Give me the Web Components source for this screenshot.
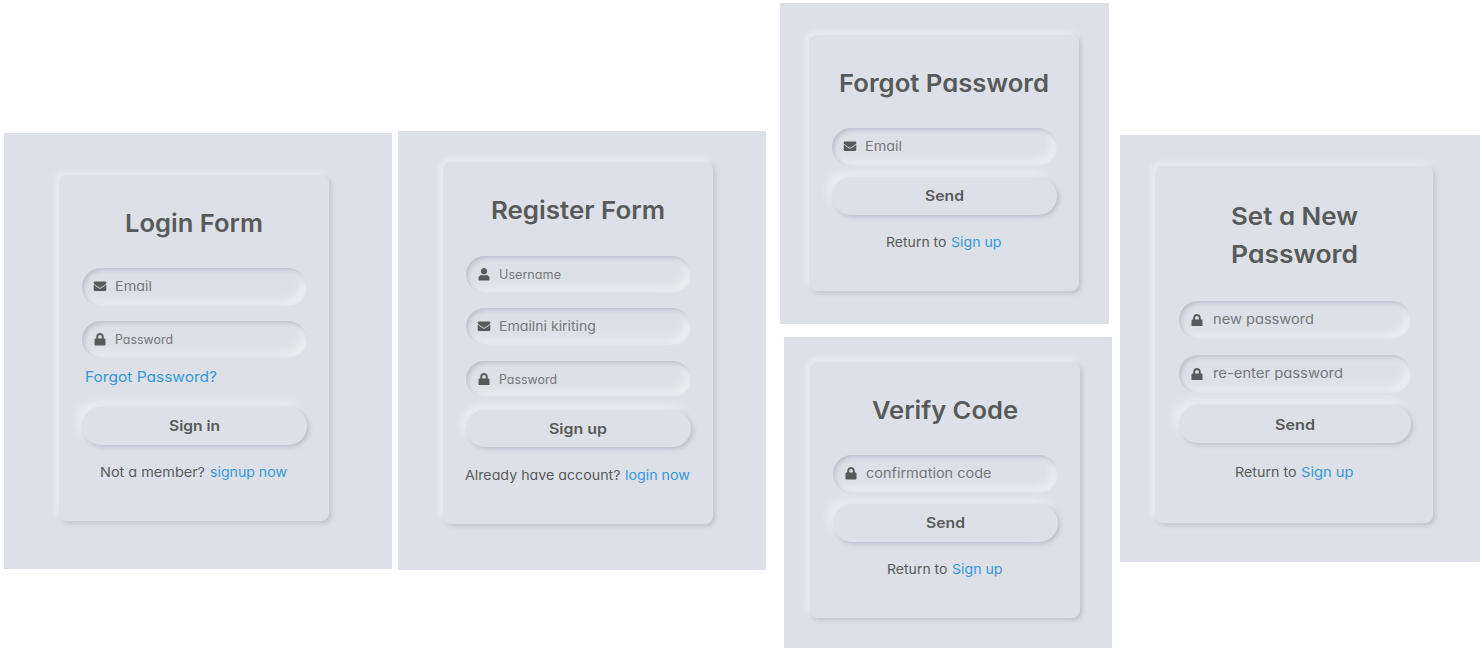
<!DOCTYPE html>
<html lang="en">
<head>
<meta charset="utf-8">
<title>Account forms</title>
<style>
html,body{margin:0;background:#fff}
body{font-family:Inter,"Open Sans",sans-serif;color:#595959;font-feature-settings:"cv11" 1;width:1482px;height:648px;overflow:hidden}
</style>
</head>
<body>
<forms-page></forms-page>
<script>
const define = (name, html, setup) => customElements.define(name, class extends HTMLElement {
  connectedCallback() {
    if (this.shadowRoot) return;
    const root = this.attachShadow({ mode: 'open' });
    root.innerHTML = html;
    if (setup) setup(this, root);
  }
});

/* Text widened to an even measure given in pixels. */
define('fit-text', `<style>:host{display:inline-block;white-space:nowrap}span{display:inline-block;transform-origin:0 50%}</style><span><slot></slot></span>`, el => {
  el.style.width = el.getAttribute('w') + 'px';
});

define('form-panel', `<style>
:host{display:block;box-sizing:border-box;flex:none;background:#dde1e7}
.card{box-sizing:border-box;width:var(--cw,270px);height:var(--ch);padding:0 22px 0 var(--px,23px);border-radius:8px;background:#dde1e7;
box-shadow:-3px -3px 7px #ffffff73,2px 2px 5px rgba(94,104,121,.288);display:flex;flex-direction:column}
</style><div class="card"><slot></slot></div>`);

define('form-title', `<style>:host{display:flex;flex-direction:column;align-items:center;flex:none;margin-top:29px;font-size:24.4px;line-height:38px;font-weight:600}</style><slot></slot>`);

const icons = {
  mail: [512, 'M502.3 190.8c3.9-3.1 9.7-.2 9.7 4.7V400c0 26.500-21.500 48-48 48H48c-26.500 0-48-21.500-48-48V195.600c0-5 5.700-7.800 9.700-4.700 22.400 17.400 52.100 39.500 154.100 113.600 21.100 15.400 56.700 47.800 92.200 47.600 35.700.3 72-32.800 92.300-47.600 102-74.100 131.600-96.300 154-113.700zM256 320c23.200.4 56.600-29.200 73.400-41.400 132.700-96.300 142.800-104.700 173.400-128.700 5.800-4.500 9.200-11.500 9.200-18.900v-19c0-26.500-21.500-48-48-48H48c-26.500 0-48 21.500-48 48v19c0 7.400 3.400 14.300 9.200 18.900 30.600 23.900 40.700 32.400 173.400 128.700 16.800 12.200 50.200 41.800 73.400 41.400z'],
  lock: [448, 'M400 224h-24v-72C376 68.200 307.800 0 224 0S72 68.200 72 152v72H48c-26.500 0-48 21.500-48 48v192c0 26.500 21.500 48 48 48h352c26.500 0 48-21.500 48-48V272c0-26.500-21.500-48-48-48zm-104 0H152v-72c0-39.700 32.300-72 72-72s72 32.300 72 72v72z'],
  user: [448, 'M224 256c70.700 0 128-57.300 128-128S294.700 0 224 0 96 57.300 96 128s57.300 128 128 128zm89.600 32h-16.700c-22.200 10.200-46.900 16-72.900 16s-50.600-5.800-72.900-16h-16.700C60.200 288 0 348.200 0 422.400V464c0 26.500 21.500 48 48 48h352c26.500 0 48-21.500 48-48v-41.600c0-74.200-60.200-134.400-134.400-134.400z']
};
define('form-field', `<style>
:host{display:flex;align-items:center;flex:none;box-sizing:border-box;height:37.5px;padding-left:9.4px;border-radius:19px;font-size:13.500px;line-height:20px;color:#75777a;
box-shadow:inset 2px 2px 5px #babecc,inset -5px -5px 10px #ffffff73}
svg{width:18px;height:12.6px;margin-right:var(--gap,5.6px);fill:#595959;flex:none}
.t{margin-top:var(--drop,-1px)}
</style><svg><path/></svg><span class="t"><slot></slot></span>`, (el, root) => {
  const [w, d] = icons[el.getAttribute('icon')];
  root.querySelector('svg').setAttribute('viewBox', `0 0 ${w} 512`);
  root.querySelector('path').setAttribute('d', d);
});

define('form-button', `<style>
:host{display:flex;justify-content:center;align-items:center;flex:none;box-sizing:border-box;height:38px;padding-top:var(--nudge,0);border-radius:19px;font-size:14.500px;font-weight:600;line-height:20px;
background:#dde1e7;box-shadow:2px 2px 5px #babecc,-5px -5px 10px #ffffff73}
</style><slot></slot>`);

define('form-note', `<style>
:host{display:flex;justify-content:center;gap:4px;flex:none;margin-left:-1px;font-size:13.500px;line-height:22px}
::slotted(.link){color:#3498db}
</style><slot></slot>`);

define('forms-page', `<style>
:host{display:flex;align-items:flex-start;width:1482px;height:648px;box-sizing:border-box;padding-left:4px}
.login{width:388px;height:436px;margin-top:133px;padding:42px 0 0 55px;--ch:346px}
.register{width:368px;height:439px;margin:131px 0 0 6px;padding:31px 0 0 45px;--ch:362px;--nudge:1.5px}
.stack{flex:none;width:332px;margin:3px 0 0 14px}
.forgot{width:329px;height:321px;padding:32px 0 0 29px;--ch:256px}
.verify{width:328px;height:311px;margin:13px 0 0 4px;padding:25px 0 0 26px;--ch:256px}
.reset{width:360px;height:427px;margin:135px 0 0 8px;padding:31px 0 0 35px;--cw:278px;--ch:357px;--px:24px;--gap:6.6px;--nudge:1.5px}
.recover{justify-content:flex-start;font-size:14.500px;padding-left:4px}
.small{font-size:12.500px;--drop:1px}
</style>
<form-panel class="login">
  <form-title><fit-text w="139">Login Form</fit-text></form-title>
  <form-field icon="mail" style="margin-top:26px"><fit-text w="38">Email</fit-text></form-field>
  <form-field icon="lock" class="small" style="margin-top:15.5px;height:37px"><fit-text w="59">Password</fit-text></form-field>
  <form-note class="recover" style="margin-top:8px"><fit-text class="link" w="133">Forgot Password?</fit-text></form-note>
  <form-button style="margin-top:18.7px"><fit-text w="52">Sign in</fit-text></form-button>
  <form-note style="margin-top:16.600px"><fit-text w="106">Not a member?</fit-text><fit-text class="link" w="78">signup now</fit-text></form-note>
</form-panel>
<form-panel class="register">
  <form-title><fit-text w="175">Register Form</fit-text></form-title>
  <form-field icon="user" class="small" style="margin-top:27px;height:36.5px"><fit-text w="63">Username</fit-text></form-field>
  <form-field icon="mail" style="margin-top:15.5px;height:37.2px"><fit-text w="98">Emailni kiriting</fit-text></form-field>
  <form-field icon="lock" class="small" style="margin-top:15.8px;height:36.3px"><fit-text w="59">Password</fit-text></form-field>
  <form-button style="margin-top:12.7px;height:37px"><fit-text w="59">Sign up</fit-text></form-button>
  <form-note style="margin-top:17px"><fit-text w="156.5">Already have account?</fit-text><fit-text class="link" w="66">login now</fit-text></form-note>
</form-panel>
<div class="stack">
  <form-panel class="forgot">
    <form-title><fit-text w="211">Forgot Password</fit-text></form-title>
    <form-field icon="mail" style="margin-top:26px"><fit-text w="38">Email</fit-text></form-field>
    <form-button style="margin-top:11.5px"><fit-text w="40">Send</fit-text></form-button>
    <form-note style="margin-top:16px"><fit-text w="61.5">Return to</fit-text><fit-text class="link" w="51.5">Sign up</fit-text></form-note>
  </form-panel>
  <form-panel class="verify">
    <form-title><fit-text w="147">Verify Code</fit-text></form-title>
    <form-field icon="lock" style="margin-top:26px"><fit-text w="126.5">confirmation code</fit-text></form-field>
    <form-button style="margin-top:11.2px;height:38.3px"><fit-text w="40">Send</fit-text></form-button>
    <form-note style="margin-top:16px"><fit-text w="61.5">Return to</fit-text><fit-text class="link" w="51.5">Sign up</fit-text></form-note>
  </form-panel>
</div>
<form-panel class="reset">
  <form-title style="margin-top:31px"><fit-text w="128">Set a New</fit-text><fit-text w="128">Password</fit-text></form-title>
  <form-field icon="lock" style="margin-top:28px;height:37.7px"><fit-text w="102">new password</fit-text></form-field>
  <form-field icon="lock" style="margin-top:16px;height:38.5px"><fit-text w="131">re-enter password</fit-text></form-field>
  <form-button style="margin-top:11.7px"><fit-text w="41">Send</fit-text></form-button>
  <form-note style="margin-top:18px"><fit-text w="62.5">Return to</fit-text><fit-text class="link" w="53.5">Sign up</fit-text></form-note>
</form-panel>`);

/* Font sizes are inherited from elements defined later, so widths are fitted once all exist. */
const fit = root => root.querySelectorAll('*').forEach(el => {
  if (el.localName === 'fit-text') {
    const span = el.shadowRoot.querySelector('span');
    span.style.transform = `scaleX(${(el.getAttribute('w') - 1) / span.getBoundingClientRect().width})`;
  }
  if (el.shadowRoot) fit(el.shadowRoot);
});
fit(document);
</script>
</body>
</html>
